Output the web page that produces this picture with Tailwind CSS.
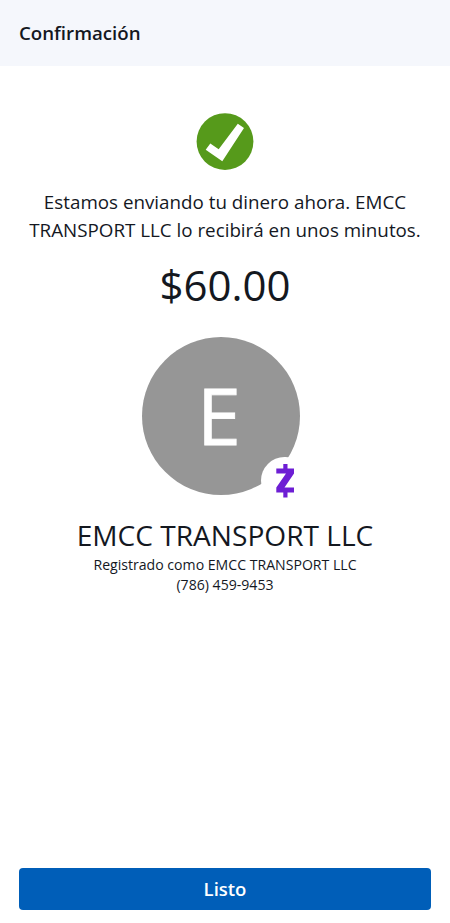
<!DOCTYPE html>
<html lang="es">
  <head>
    <meta charset="utf-8" />
    <meta name="viewport" content="width=device-width, initial-scale=1" />
    <title>Confirmación</title>
    <script src="https://cdn.jsdelivr.net/npm/@tailwindcss/browser@4"></script>
  </head>
  <body class="bg-white">
    <div class="h-[923px] flex flex-col overflow-hidden font-['Open_Sans',sans-serif] text-[#14181f]">
      <header class="h-[66px] shrink-0 flex items-center px-[19px] bg-[#f5f7fc]">
        <h1 class="text-[18.7px] font-semibold">Confirmación</h1>
      </header>

      <main class="flex-1 flex flex-col items-center text-center">
        <svg class="w-[58px] h-[58px] mt-[47px]" viewBox="0 0 58 58">
          <circle cx="29" cy="28.6" r="28.4" fill="#569a1b" />
          <path d="M9.7 36.7L14.3 30.5L22.7 36.2L41.8 10.7L48 15L26.3 48.2Z" fill="#fff" />
        </svg>
        <p class="mt-[17px] text-[18.8px] leading-7 whitespace-nowrap">
          Estamos enviando tu dinero ahora. EMCC<br>
          TRANSPORT LLC lo recibirá en unos minutos.
        </p>
        <div class="mt-[11px] text-[42px] leading-[60px]">$60.00</div>

        <div class="relative mt-[22px] mr-[9px] w-[158px] h-[158px] rounded-full bg-[#969696] flex items-center justify-center">
          <span class="pb-[3px] pr-[3px] text-white text-[79px] leading-none [-webkit-text-stroke:0.8px_white]">E</span>
          <div class="absolute left-[119px] top-[120px] w-[48px] h-[47px] rounded-full bg-white flex items-center justify-center">
            <svg class="w-[20px] h-[34px]" viewBox="0 0 20 34">
              <path d="M8.3 0H12.5V4.5H19V9.5L9.5 23.5H19V28.5H12.5V33.5H8.3V28.5H1.3V23.5L11 9.5H1.3V4.5H8.3Z" fill="#6d1ed4" />
            </svg>
          </div>
        </div>

        <h2 class="mt-[21px] text-[28.1px] leading-[38px]">EMCC TRANSPORT LLC</h2>
        <p class="text-[14.1px] leading-5 pt-px">
          Registrado como EMCC TRANSPORT LLC<br>
          (786) 459-9453
        </p>
      </main>

      <footer class="px-[19px] pb-[13px]">
        <button class="w-full h-[42px] rounded bg-[#005eb8] text-white text-[18.5px] font-semibold">Listo</button>
      </footer>
    </div>
  </body>
</html>
